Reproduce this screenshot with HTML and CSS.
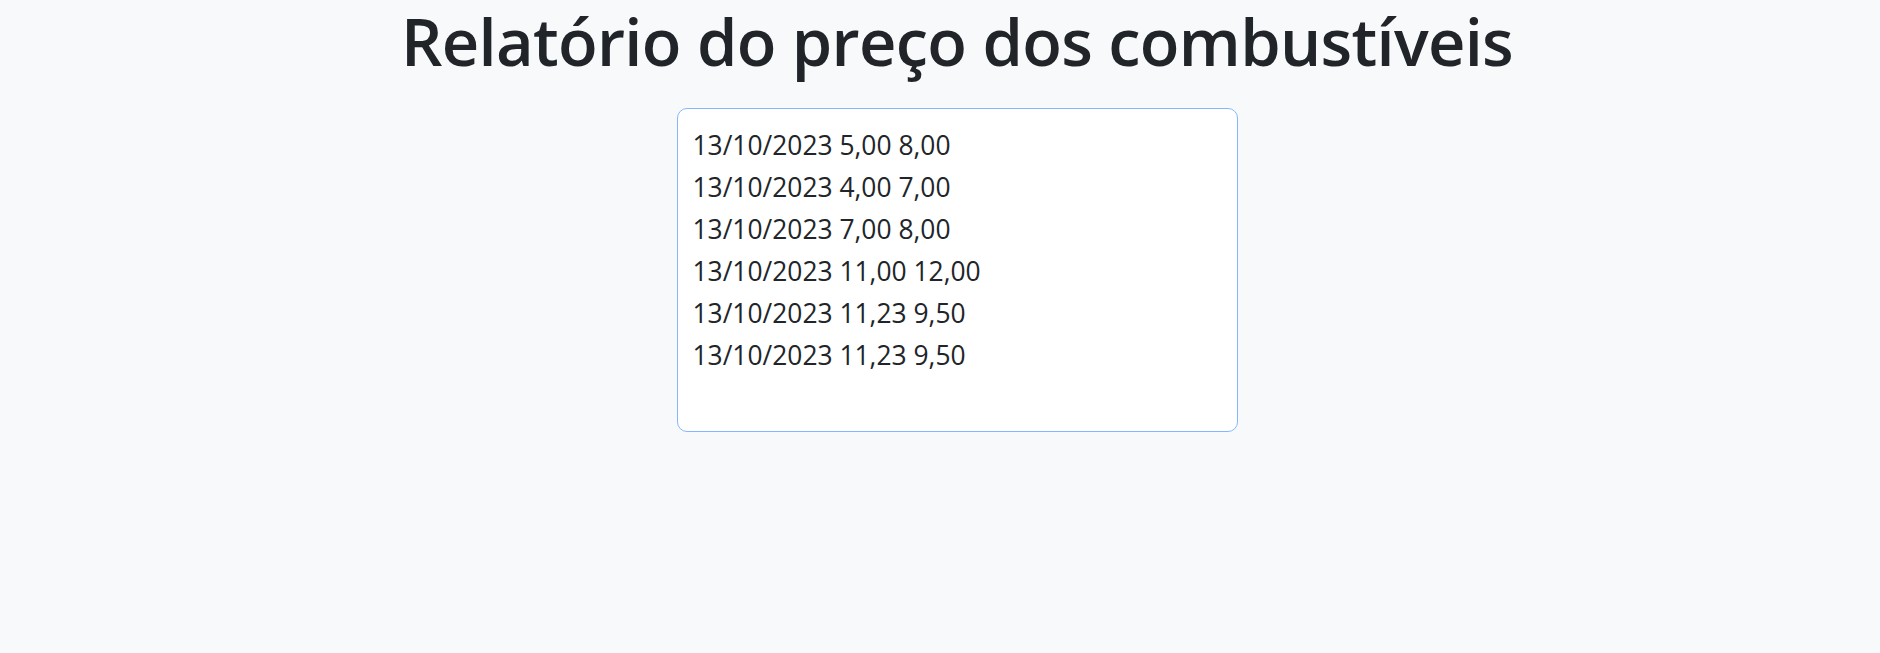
FILE: index.html
```html
<!DOCTYPE html>
<html lang="pt-BR">
<head>
<meta charset="utf-8">
<title>Relatório do preço dos combustíveis</title>
<link rel="stylesheet" href="styles.css">
</head>
<body>
<main class="page">
  <h1 class="title">Relatório do preço dos combustíveis</h1>
  <textarea class="report" readonly>13/10/2023 5,00 8,00
13/10/2023 4,00 7,00
13/10/2023 7,00 8,00
13/10/2023 11,00 12,00
13/10/2023 11,23 9,50
13/10/2023 11,23 9,50</textarea>
</main>
</body>
</html>
```
FILE: styles.css
```css
html, body {
  margin: 0;
  padding: 0;
  background: #f8f9fa;
  color: #212529;
  font-family: "Open Sans", "Noto Sans", sans-serif;
}

.page {
  display: flex;
  flex-direction: column;
  align-items: center;
  padding: 2px 0 0 34px;
}

.title {
  margin: 0;
  font-size: 65px;
  font-weight: 600;
  letter-spacing: -0.7px;
  line-height: 78px;
  white-space: nowrap;
  color: #212529;
}

.report {
  box-sizing: border-box;
  width: 561px;
  height: 324px;
  margin: 28px 0 0 0;
  padding: 15px 15px 13px;
  border: 1px solid #86b7fe;
  border-radius: 10px;
  background: #fff;
  color: #212529;
  font-family: "Open Sans", "Noto Sans", sans-serif;
  font-size: 26.4px;
  line-height: 42px;
  resize: none;
  outline: none;
  overflow: hidden;
}
```
